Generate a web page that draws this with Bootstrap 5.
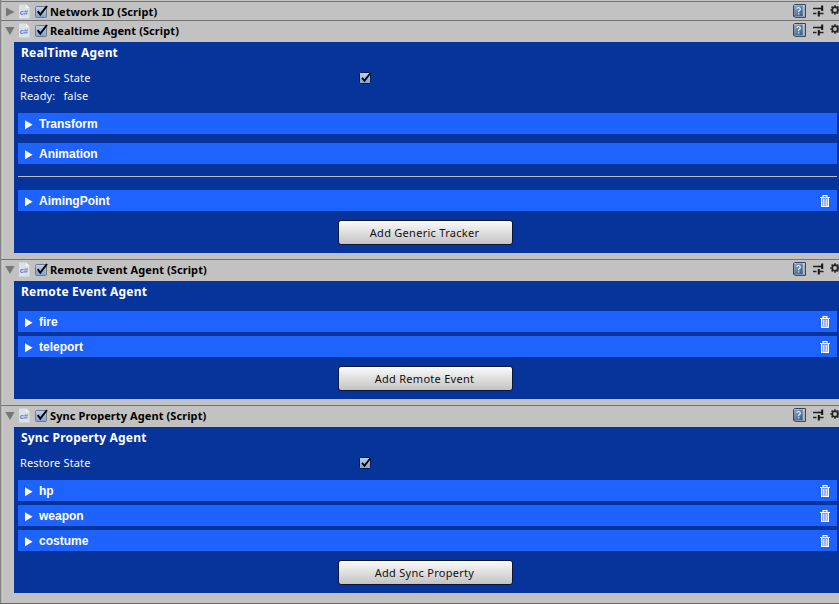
<!DOCTYPE html>
<html lang="en">
<head>
<meta charset="utf-8">
<title>Inspector</title>
<link rel="stylesheet" href="https://cdn.jsdelivr.net/npm/bootstrap@5.3.0/dist/css/bootstrap.min.css">
<style>
body{background:#c2c2c2;font:11px/14px "Noto Sans","Open Sans",sans-serif;color:#000;height:604px;overflow:hidden}
.inspector{height:604px;border-left:1px solid #858585;border-bottom:1px solid #666;padding-top:1px;box-shadow:inset 1px 0 #b0b0b0,inset 2px 0 #cecece}
.component{border-top:1px solid #757575;margin-bottom:6px}
.component.closed{margin-bottom:0}
.head{height:21px;padding:0 0 3px 4px;font-weight:700;letter-spacing:.09px}
.closed .head{height:18px;padding-bottom:0}
.head svg,.tracker svg,.field svg{display:block;flex:none}
.arrow{margin-top:2px}
.closed .arrow{margin-top:1px}
.closed .title{padding-top:2px}
.title{padding:1px 0 0 1px}
.tools{margin-right:-1px}
.panel{margin-left:13px;background:#07349b;color:#fff;padding:0 2px 0 4px}
.heading{font-weight:700;font-size:12px;height:27px;line-height:16px;padding:3px 0 0 3px;letter-spacing:.19px}
.field{height:18px;padding-left:2px;letter-spacing:.14px;color:#f4f6fb}
.field .caption{width:339px}
.tick{margin-bottom:2px}
.trackers{display:grid;gap:4px;padding-top:8px}
.trackers.spaced{gap:9px}
.events .trackers{padding-top:3px}
.tracker{height:21px;background:#1f63ff;padding:0 7px;font:700 12px/20px "Liberation Sans",Arial,sans-serif;letter-spacing:0}
.tracker .caption{padding:1px 0 0 6px}
.play{margin-top:2px}
.rule{height:1px;background:#b9bcc9;margin:12px 0 5px}
.add{display:block;width:175px;height:25px;margin:9px 0 0 320px;padding:0 2px 0 0;border:1px solid #0a1638;border-radius:3px;background:linear-gradient(#fbfbfb,#c3c3c3);font:11px/24px "Noto Sans","Open Sans",sans-serif;letter-spacing:.28px;color:#111}
.realtime .panel{height:211px}.events .panel{height:118px}.sync .panel{height:166px}
</style>
<script src="https://cdn.jsdelivr.net/npm/bootstrap@5.3.0/dist/js/bootstrap.bundle.min.js"></script>
</head>
<body>
<svg width="0" height="0" class="position-absolute">
<defs>
<linearGradient id="gb" x1="0" y1="0" x2="0" y2="1"><stop offset="0" stop-color="#bdd2ea"/><stop offset="1" stop-color="#7fa3cf"/></linearGradient>
<linearGradient id="gk" x1="0" y1="0" x2="1" y2="1"><stop offset="0" stop-color="#8fa9c6"/><stop offset="1" stop-color="#37587f"/></linearGradient>
<symbol id="right" viewBox="0 0 10 10"><path d="M1 .5 9.500 5 1 9.500Z" fill="#777"/></symbol>
<symbol id="down" viewBox="0 0 10 10"><path d="M.3 1H9.500L5 9Z" fill="#777"/></symbol>
<symbol id="play" viewBox="0 0 8 10"><path d="M0 .2 7.600 4.700 0 9.200Z" fill="#fff"/></symbol>
<symbol id="file" viewBox="0 0 11 15"><path d="M0 .5h7l3.500 3.500v10.500H0Z" fill="#dbe1e8"/><path d="M7 .5v3.500h3.500Z" fill="#f5f5f5"/><text x=".8" y="11" font-family="Liberation Sans, Arial, sans-serif" font-size="7.500" font-weight="700" letter-spacing="-.3" fill="#4b7fd0">c#</text></symbol>
<symbol id="check" viewBox="0 0 15 15"><rect x="1.500" y="2.500" width="11" height="11" rx="1" fill="url(#gb)" stroke="#6b7a8e"/><path d="M3.700 7.200 6.300 10.600 13 2" fill="none" stroke="#000" stroke-width="2"/></symbol>
<symbol id="tick" viewBox="0 0 13 13"><rect x=".5" y="1.500" width="11" height="11" rx="1" fill="url(#gb)" stroke="#071c50"/><path d="M3 6.800 5.500 9.800 11.300 2.200" fill="none" stroke="#000" stroke-width="1.800"/></symbol>
<symbol id="book" viewBox="0 0 13 14"><path d="M1.500.6H12.400V13.400H3L.6 12.400V1.500Z" fill="#dce3ea" stroke="#27364a"/><path d="M1 1.500H9.800V12H1Z" fill="url(#gk)"/><path d="M9.800 12H1L2.500 13H11V2.500" fill="none" stroke="#52657d" stroke-width=".6"/><path d="M4 5Q4 3.500 5.500 3.500T7.300 5.200Q7.300 6.300 5.700 7V8.200M5.700 9.300V10.500" fill="none" stroke="#f4f8fc" stroke-width="1.200"/></symbol>
<symbol id="sliders" viewBox="0 0 11 12"><path d="M0 3.500H6M0 8.500H3.500M6 8.500H10.500" stroke="#222" stroke-width="1.400"/><path d="M9.200 .5V6M5.800 6V11.500" stroke="#151515" stroke-width="2"/><path d="M5.500 3.500H9" stroke="#151515" stroke-width="1.600"/></symbol>
<symbol id="gear" viewBox="0 0 10 10"><circle cx="5" cy="5" r="2.800" fill="none" stroke="#262626" stroke-width="1.800"/><path d="M5 .3V2M5 8V9.700M.3 5H2M8 5H9.700M1.600 1.600 2.900 2.900M7.100 7.100 8.400 8.400M1.600 8.400 2.900 7.100M7.100 2.900 8.400 1.600" stroke="#262626" stroke-width="1.600"/></symbol>
<symbol id="trash" viewBox="0 0 10 12"><path d="M0 2.500H10M3 2V.6H7V2" fill="none" stroke="#fff" stroke-width="1.200"/><path d="M1.600 3V11.400H8.400V3" fill="#6f98ff" stroke="#fff" stroke-width="1.200"/><path d="M3.800 4V10.500M6.200 4V10.500" stroke="#fff"/></symbol>
<symbol id="toolset" viewBox="0 0 47 15"><use href="#book" width="13" height="14"/><use href="#sliders" x="20" y="1" width="11" height="12"/><use href="#gear" x="37" y="1" width="10" height="10"/></symbol>
</defs>
</svg>
<main class="inspector">
<section class="component closed">
<div class="head d-flex align-items-center"><svg class="arrow" width="10" height="10"><use href="#right"/></svg><svg class="ms-1" width="11" height="15"><use href="#file"/></svg><svg class="ms-1" width="15" height="15"><use href="#check"/></svg><span class="title">Network ID (Script)</span><svg class="tools ms-auto" width="47" height="15"><use href="#toolset"/></svg></div>
</section>
<section class="component realtime">
<div class="head d-flex align-items-center"><svg class="arrow" width="10" height="10"><use href="#down"/></svg><svg class="ms-1" width="11" height="15"><use href="#file"/></svg><svg class="ms-1" width="15" height="15"><use href="#check"/></svg><span class="title">Realtime Agent (Script)</span><svg class="tools ms-auto" width="47" height="15"><use href="#toolset"/></svg></div>
<div class="panel">
<div class="heading">RealTime Agent</div>
<div class="field d-flex align-items-center"><span class="caption">Restore State</span><svg class="tick" width="13" height="13"><use href="#tick"/></svg></div>
<div class="field d-flex align-items-center">Ready:<span class="ms-2">false</span></div>
<div class="trackers spaced">
<div class="tracker d-flex align-items-center"><svg class="play" width="8" height="10"><use href="#play"/></svg><span class="caption">Transform</span></div>
<div class="tracker d-flex align-items-center"><svg class="play" width="8" height="10"><use href="#play"/></svg><span class="caption">Animation</span></div>
</div>
<div class="rule"></div>
<div class="trackers">
<div class="tracker d-flex align-items-center"><svg class="play" width="8" height="10"><use href="#play"/></svg><span class="caption">AimingPoint</span><svg class="ms-auto" width="10" height="12"><use href="#trash"/></svg></div>
</div>
<button type="button" class="btn add">Add Generic Tracker</button>
</div>
</section>
<section class="component events">
<div class="head d-flex align-items-center"><svg class="arrow" width="10" height="10"><use href="#down"/></svg><svg class="ms-1" width="11" height="15"><use href="#file"/></svg><svg class="ms-1" width="15" height="15"><use href="#check"/></svg><span class="title">Remote Event Agent (Script)</span><svg class="tools ms-auto" width="47" height="15"><use href="#toolset"/></svg></div>
<div class="panel">
<div class="heading">Remote Event Agent</div>
<div class="trackers">
<div class="tracker d-flex align-items-center"><svg class="play" width="8" height="10"><use href="#play"/></svg><span class="caption">fire</span><svg class="ms-auto" width="10" height="12"><use href="#trash"/></svg></div>
<div class="tracker d-flex align-items-center"><svg class="play" width="8" height="10"><use href="#play"/></svg><span class="caption">teleport</span><svg class="ms-auto" width="10" height="12"><use href="#trash"/></svg></div>
</div>
<button type="button" class="btn add">Add Remote Event</button>
</div>
</section>
<section class="component sync">
<div class="head d-flex align-items-center"><svg class="arrow" width="10" height="10"><use href="#down"/></svg><svg class="ms-1" width="11" height="15"><use href="#file"/></svg><svg class="ms-1" width="15" height="15"><use href="#check"/></svg><span class="title">Sync Property Agent (Script)</span><svg class="tools ms-auto" width="47" height="15"><use href="#toolset"/></svg></div>
<div class="panel">
<div class="heading">Sync Property Agent</div>
<div class="field d-flex align-items-center"><span class="caption">Restore State</span><svg class="tick" width="13" height="13"><use href="#tick"/></svg></div>
<div class="trackers">
<div class="tracker d-flex align-items-center"><svg class="play" width="8" height="10"><use href="#play"/></svg><span class="caption">hp</span><svg class="ms-auto" width="10" height="12"><use href="#trash"/></svg></div>
<div class="tracker d-flex align-items-center"><svg class="play" width="8" height="10"><use href="#play"/></svg><span class="caption">weapon</span><svg class="ms-auto" width="10" height="12"><use href="#trash"/></svg></div>
<div class="tracker d-flex align-items-center"><svg class="play" width="8" height="10"><use href="#play"/></svg><span class="caption">costume</span><svg class="ms-auto" width="10" height="12"><use href="#trash"/></svg></div>
</div>
<button type="button" class="btn add">Add Sync Property</button>
</div>
</section>
</main>
</body>
</html>
